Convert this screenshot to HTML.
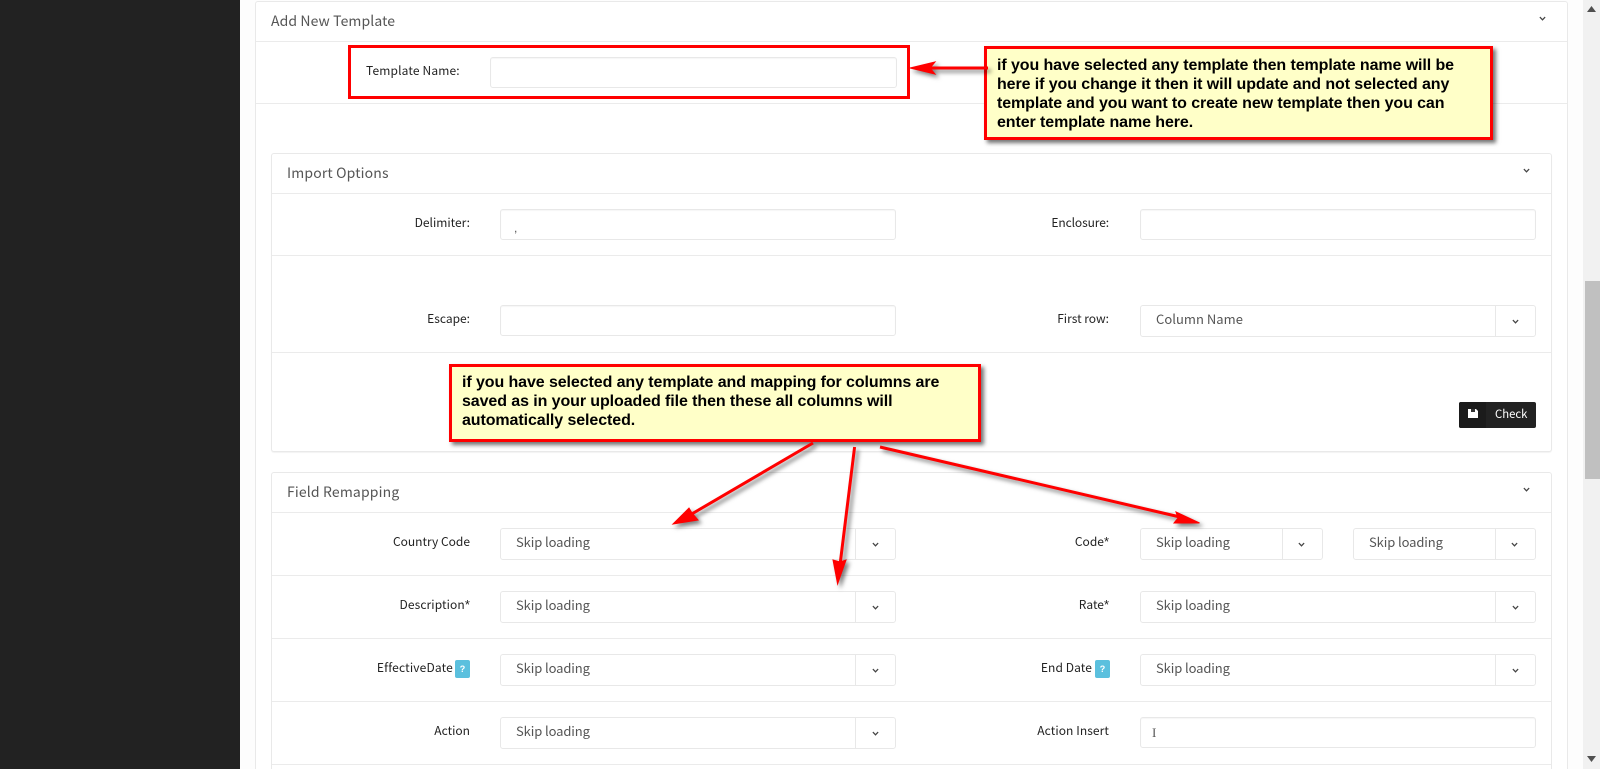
<!DOCTYPE html>
<html lang="en">
<head>
<meta charset="utf-8">
<title>Add New Template</title>
<style>
html,body{margin:0;padding:0;width:1600px;height:769px;overflow:hidden;background:#fdfdfd}
body{position:relative;font-family:"Liberation Sans","Noto Sans CJK JP",sans-serif}
div,span{position:absolute;box-sizing:border-box}
.side{left:0;top:0;width:240px;height:769px;background:#222}
.sb{left:1583px;top:0;width:17px;height:769px;background:#f1f1f1}
.thumb{left:1585px;top:281px;width:15px;height:198px;background:#c0c0c0}
.panel{background:#fff;border:1px solid #e9e9e9;border-radius:3px}
.hl{height:1px;background:#ebebeb}
.ttl{font-size:14px;line-height:20px;color:#555;font-family:"Noto Sans CJK JP","Liberation Sans",sans-serif;white-space:nowrap;letter-spacing:.15px}
.lbl{font-size:12px;line-height:16px;color:#222;text-align:right;white-space:nowrap;font-family:"Noto Sans CJK JP","Liberation Sans",sans-serif;letter-spacing:0}
.lbl i{font-style:normal;font-family:"Liberation Sans",sans-serif;font-size:13px;line-height:12px}
.inp{background:#fff;border:1px solid #e8e8e8;border-radius:3px;box-shadow:inset 0 1px 1px rgba(0,0,0,.04)}
.sel{background:#fff;border:1px solid #e8e8e8;border-radius:3px;font-size:13px;line-height:26px;color:#555;padding-left:15px;font-family:"Noto Sans CJK JP","Liberation Sans",sans-serif;letter-spacing:-.1px;white-space:nowrap}
.dv{top:0;bottom:0;width:1px;background:#e8e8e8}
.chev{width:7px;height:5.25px}
.sel .chev{margin-top:-.5px}
.call{background:#ffffc8;border:3px solid #f00;box-shadow:3px 3px 4px rgba(0,0,0,.55);color:#000;font-weight:bold;font-size:16px;line-height:19px;white-space:nowrap;letter-spacing:-.09px}
.badge{background:#5bc0de;border-radius:2px;color:#fff;font-size:9px;font-weight:bold;text-align:center;line-height:18px}
.btn{background:#222;border-radius:2px;color:#fff;font-size:11.3px;line-height:24px;font-family:"Noto Sans CJK JP","Liberation Sans",sans-serif}
svg{position:absolute;overflow:visible}
</style>
</head>
<body>
<div class="side"></div>
<div class="sb"></div>
<div class="thumb"></div>
<svg style="left:1586px;top:5px" width="11" height="8"><path d="M5.5 1 L10 7 L1 7 Z" fill="#505050"/></svg>
<svg style="left:1586px;top:755px" width="11" height="8"><path d="M1 1 L10 1 L5.5 7 Z" fill="#505050"/></svg>

<!-- outer panel -->
<div class="panel" style="left:255px;top:1px;width:1313px;height:790px"></div>
<div class="hl" style="left:256px;top:41px;width:1311px"></div>
<div class="hl" style="left:256px;top:103px;width:1311px"></div>
<div class="ttl" style="left:271px;top:11px;letter-spacing:.1px">Add New Template</div>
<svg class="chev" style="left:1539px;top:16px" viewBox="0 0 8 6"><path d="M1 1.2 L4 4.4 L7 1.2" fill="none" stroke="#444" stroke-width="1.4"/></svg>

<div class="lbl" style="left:366px;top:63px;text-align:left;letter-spacing:.15px">Template Name:</div>
<div class="inp" style="left:490px;top:57px;width:407px;height:31px"></div>
<div style="left:348px;top:45px;width:562px;height:54px;border:3px solid #f00"></div>

<!-- import options -->
<div class="panel" style="left:271px;top:153px;width:1281px;height:299px;box-shadow:0 1px 1px rgba(0,0,0,.05)"></div>
<div class="hl" style="left:272px;top:193px;width:1279px"></div>
<div class="hl" style="left:272px;top:255px;width:1279px"></div>
<div class="hl" style="left:272px;top:352px;width:1279px"></div>
<div class="ttl" style="left:287px;top:163px">Import Options</div>
<svg class="chev" style="left:1523px;top:168px" viewBox="0 0 8 6"><path d="M1 1.2 L4 4.4 L7 1.2" fill="none" stroke="#444" stroke-width="1.4"/></svg>

<div class="lbl" style="left:370px;width:100px;top:215px">Delimiter:</div>
<div class="inp" style="left:500px;top:209px;width:396px;height:31px"></div>
<div style="left:514px;top:221px;font-size:12px;line-height:14px;color:#555">,</div>
<div class="lbl" style="left:1009px;width:100px;top:215px;letter-spacing:-.1px">Enclosure:</div>
<div class="inp" style="left:1140px;top:209px;width:396px;height:31px"></div>

<div class="lbl" style="left:370px;width:100px;top:311px">Escape:</div>
<div class="inp" style="left:500px;top:305px;width:396px;height:31px"></div>
<div class="lbl" style="left:1009px;width:100px;top:311px">First row:</div>
<div class="sel" style="left:1140px;top:305px;width:396px;height:32px;letter-spacing:.03px">Column Name<span class="dv" style="left:354px"></span><svg class="chev" style="left:371px;top:13px" viewBox="0 0 8 6"><path d="M1 1.2 L4 4.4 L7 1.2" fill="none" stroke="#444" stroke-width="1.4"/></svg></div>

<div class="btn" style="left:1459px;top:402px;width:77px;height:26px">
<span style="left:0;top:0;width:27px;height:26px;background:#1b1b1b;border-radius:2px 0 0 2px"></span>
<svg style="left:9px;top:7px" width="10" height="9" viewBox="0 0 10 9"><path d="M0 0 H8 L10 2 V9 H0 Z" fill="#fff"/><rect x="3" y="0" width="4" height="3" fill="#333"/></svg>
<span style="left:36px;top:0">Check</span>
</div>

<!-- field remapping -->
<div class="panel" style="left:271px;top:472px;width:1281px;height:320px"></div>
<div class="hl" style="left:272px;top:512px;width:1279px"></div>
<div class="hl" style="left:272px;top:575px;width:1279px"></div>
<div class="hl" style="left:272px;top:638px;width:1279px"></div>
<div class="hl" style="left:272px;top:701px;width:1279px"></div>
<div class="hl" style="left:272px;top:764px;width:1279px"></div>
<div class="ttl" style="left:287px;top:482px">Field Remapping</div>
<svg class="chev" style="left:1523px;top:487px" viewBox="0 0 8 6"><path d="M1 1.2 L4 4.4 L7 1.2" fill="none" stroke="#444" stroke-width="1.4"/></svg>

<div class="lbl" style="left:370px;width:100px;top:534px">Country Code</div>
<div class="sel" style="left:500px;top:528px;width:396px;height:32px">Skip loading<span class="dv" style="left:354px"></span><svg class="chev" style="left:371px;top:13px" viewBox="0 0 8 6"><path d="M1 1.2 L4 4.4 L7 1.2" fill="none" stroke="#444" stroke-width="1.4"/></svg></div>
<div class="lbl" style="left:1009px;width:100px;top:534px">Code<i>*</i></div>
<div class="sel" style="left:1140px;top:528px;width:183px;height:32px">Skip loading<span class="dv" style="left:141px"></span><svg class="chev" style="left:157px;top:13px" viewBox="0 0 8 6"><path d="M1 1.2 L4 4.4 L7 1.2" fill="none" stroke="#444" stroke-width="1.4"/></svg></div>
<div class="sel" style="left:1353px;top:528px;width:183px;height:32px">Skip loading<span class="dv" style="left:141px"></span><svg class="chev" style="left:157px;top:13px" viewBox="0 0 8 6"><path d="M1 1.2 L4 4.4 L7 1.2" fill="none" stroke="#444" stroke-width="1.4"/></svg></div>

<div class="lbl" style="left:370px;width:100px;top:597px;letter-spacing:.1px">Description<i>*</i></div>
<div class="sel" style="left:500px;top:591px;width:396px;height:32px">Skip loading<span class="dv" style="left:354px"></span><svg class="chev" style="left:371px;top:13px" viewBox="0 0 8 6"><path d="M1 1.2 L4 4.4 L7 1.2" fill="none" stroke="#444" stroke-width="1.4"/></svg></div>
<div class="lbl" style="left:1009px;width:100px;top:597px">Rate<i>*</i></div>
<div class="sel" style="left:1140px;top:591px;width:396px;height:32px">Skip loading<span class="dv" style="left:354px"></span><svg class="chev" style="left:371px;top:13px" viewBox="0 0 8 6"><path d="M1 1.2 L4 4.4 L7 1.2" fill="none" stroke="#444" stroke-width="1.4"/></svg></div>

<div class="lbl" style="left:353px;width:100px;top:660px;letter-spacing:.17px">EffectiveDate</div>
<div class="badge" style="left:455px;top:660px;width:15px;height:18px">?</div>
<div class="sel" style="left:500px;top:654px;width:396px;height:32px">Skip loading<span class="dv" style="left:354px"></span><svg class="chev" style="left:371px;top:13px" viewBox="0 0 8 6"><path d="M1 1.2 L4 4.4 L7 1.2" fill="none" stroke="#444" stroke-width="1.4"/></svg></div>
<div class="lbl" style="left:992px;width:100px;top:660px;letter-spacing:.1px">End Date</div>
<div class="badge" style="left:1095px;top:660px;width:15px;height:18px">?</div>
<div class="sel" style="left:1140px;top:654px;width:396px;height:32px">Skip loading<span class="dv" style="left:354px"></span><svg class="chev" style="left:371px;top:13px" viewBox="0 0 8 6"><path d="M1 1.2 L4 4.4 L7 1.2" fill="none" stroke="#444" stroke-width="1.4"/></svg></div>

<div class="lbl" style="left:370px;width:100px;top:723px">Action</div>
<div class="sel" style="left:500px;top:717px;width:396px;height:32px">Skip loading<span class="dv" style="left:354px"></span><svg class="chev" style="left:371px;top:13px" viewBox="0 0 8 6"><path d="M1 1.2 L4 4.4 L7 1.2" fill="none" stroke="#444" stroke-width="1.4"/></svg></div>
<div class="lbl" style="left:1009px;width:100px;top:723px;letter-spacing:.08px">Action Insert</div>
<div class="inp" style="left:1140px;top:717px;width:396px;height:31px"></div>
<div style="left:1152px;top:725px;font-size:13px;line-height:16px;color:#555;font-family:'Liberation Serif',serif">I</div>

<!-- callouts -->
<div class="call" style="left:984px;top:46px;width:509px;height:94px;padding:0"><span style="left:10px;top:7px">if you have selected any template then template name will be<br>here if you change it then it will update and not selected any<br>template and you want to create new template then you can<br>enter template name here.</span></div>
<div class="call" style="left:449px;top:364px;width:532px;height:78px"><span style="left:10px;top:6px">if you have selected any template and mapping for columns are<br>saved as in your uploaded file then these all columns will<br>automatically selected.</span></div>

<!-- arrows -->
<svg style="left:0;top:0;filter:drop-shadow(3px 3px 2px rgba(0,0,0,.5))" width="1600" height="769">
<g fill="#f00" stroke="#f00">
<path d="M988 68 L930 68" stroke-width="3" fill="none"/>
<path d="M910 68 L935 62 L930 68 L935 74 Z" stroke-width="1"/>
<path d="M813 443 L690 515" stroke-width="3" fill="none"/>
<path d="M673 524 L689 508 L692 513 L698 520 Z" stroke-width="1"/>
<path d="M854.6 447 L840 565" stroke-width="3" fill="none"/>
<path d="M837.6 584 L833 560 L840 562 L846 560 Z" stroke-width="1"/>
<path d="M880 447 L1180 517" stroke-width="3" fill="none"/>
<path d="M1199.5 523 L1176 512 L1178 518 L1174 523 Z" stroke-width="1"/>
</g>
</svg>
</body>
</html>
